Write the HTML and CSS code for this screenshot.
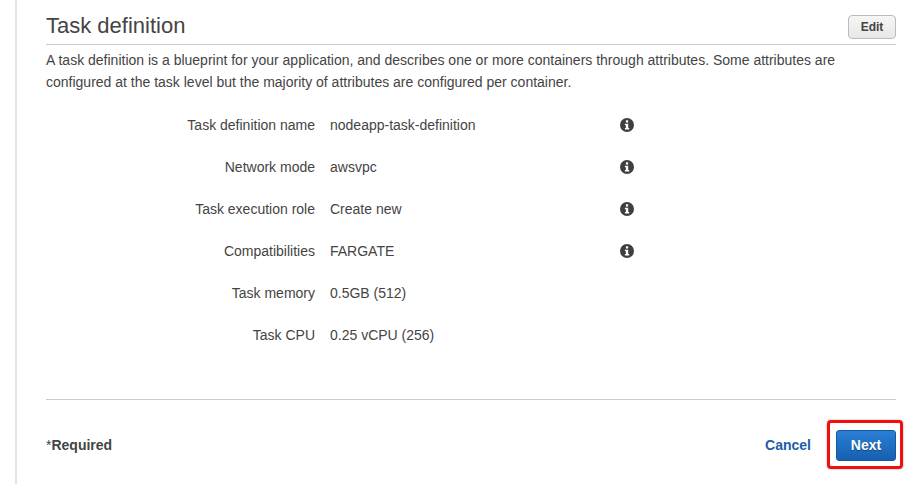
FILE: index.html
```html
<!DOCTYPE html>
<html lang="en">
<head>
<meta charset="utf-8">
<title>Task definition</title>
<link rel="stylesheet" href="styles.css">
</head>
<body>
<main class="panel">
  <header class="head">
    <h2 class="title">Task definition</h2>
    <button class="edit" type="button">Edit</button>
  </header>
  <p class="desc">A task definition is a blueprint for your application, and describes one or more containers through attributes. Some attributes are configured at the task level but the majority of attributes are configured per container.</p>
  <div class="rows">
    <div class="row"><span class="label">Task definition name</span><span class="value">nodeapp-task-definition</span>
      <svg class="info" viewBox="0 0 14 14" aria-hidden="true"><circle cx="7" cy="7" r="7" fill="#3f3f3f"/><rect x="5.9" y="2.3" width="2.3" height="2.2" rx=".5" fill="#fff"/><path d="M4.9 5.7h3.3v4.4h1v1.5H4.9v-1.5h1V7.2h-1z" fill="#fff"/></svg></div>
    <div class="row"><span class="label">Network mode</span><span class="value">awsvpc</span>
      <svg class="info" viewBox="0 0 14 14" aria-hidden="true"><circle cx="7" cy="7" r="7" fill="#3f3f3f"/><rect x="5.9" y="2.3" width="2.3" height="2.2" rx=".5" fill="#fff"/><path d="M4.9 5.7h3.3v4.4h1v1.5H4.9v-1.5h1V7.2h-1z" fill="#fff"/></svg></div>
    <div class="row"><span class="label">Task execution role</span><span class="value">Create new</span>
      <svg class="info" viewBox="0 0 14 14" aria-hidden="true"><circle cx="7" cy="7" r="7" fill="#3f3f3f"/><rect x="5.9" y="2.3" width="2.3" height="2.2" rx=".5" fill="#fff"/><path d="M4.9 5.7h3.3v4.4h1v1.5H4.9v-1.5h1V7.2h-1z" fill="#fff"/></svg></div>
    <div class="row"><span class="label">Compatibilities</span><span class="value">FARGATE</span>
      <svg class="info" viewBox="0 0 14 14" aria-hidden="true"><circle cx="7" cy="7" r="7" fill="#3f3f3f"/><rect x="5.9" y="2.3" width="2.3" height="2.2" rx=".5" fill="#fff"/><path d="M4.9 5.7h3.3v4.4h1v1.5H4.9v-1.5h1V7.2h-1z" fill="#fff"/></svg></div>
    <div class="row"><span class="label">Task memory</span><span class="value">0.5GB (512)</span></div>
    <div class="row"><span class="label">Task CPU</span><span class="value">0.25 vCPU (256)</span></div>
  </div>
  <footer class="foot">
    <span class="req">*<b>Required</b></span>
    <div class="actions">
      <a class="cancel" href="#">Cancel</a>
      <button class="next" type="button">Next</button>
      <span class="mark"></span>
    </div>
  </footer>
</main>
</body>
</html>
```
FILE: styles.css
```css
html, body { margin: 0; padding: 0; background: #fff; }
body {
  width: 924px;
  height: 484px;
  overflow: hidden;
  font-family: "Liberation Sans", Arial, sans-serif;
  font-size: 14px;
  line-height: 20px;
  color: #444;
}
.panel {
  box-sizing: border-box;
  width: 881px;
  height: 484px;
  margin-left: 15px;
  padding: 0 0 0 29px;
  border-left: 2px solid #e4e4e4;
}
.head {
  display: flex;
  align-items: flex-end;
  justify-content: space-between;
  height: 44px;
  border-bottom: 1px solid #ccc;
}
.title {
  margin: 0 0 3px;
  font-size: 22px;
  line-height: 30px;
  font-weight: 400;
  color: #444;
}
.edit {
  box-sizing: border-box;
  width: 48px;
  height: 24px;
  margin-bottom: 5px;
  padding: 0;
  border: 1px solid #bbb;
  border-radius: 4px;
  background: linear-gradient(#f6f6f6, #e7e7e7);
  font: 700 12px "Liberation Sans", Arial, sans-serif;
  color: #444;
}
.desc {
  margin: 4px 0 0;
  line-height: 22px;
  height: 44px;
}
.rows {
  margin-top: 11px;
  height: 295px;
}
.row {
  display: flex;
  align-items: center;
  height: 42px;
}
.label {
  box-sizing: border-box;
  width: 269px;
  text-align: right;
}
.value {
  width: 290px;
  margin-left: 15px;
}
.info {
  width: 14px;
  height: 14px;
}
.foot {
  display: flex;
  align-items: center;
  justify-content: space-between;
  height: 90px;
  border-top: 1px solid #ccc;
}
.req { font-size: 14px; }
.req b { font-weight: 700; }
.actions {
  position: relative;
  display: flex;
  align-items: center;
  gap: 25px;
}
.cancel {
  font-weight: 700;
  color: #1c5ea8;
  text-decoration: none;
}
.next {
  box-sizing: border-box;
  width: 60px;
  height: 31px;
  padding: 0;
  border: 1px solid #15599f;
  border-radius: 3px;
  background: linear-gradient(#2a7fd5, #1560b0);
  font: 700 14px "Liberation Sans", Arial, sans-serif;
  color: #fff;
  text-shadow: 0 1px 1px rgba(0,0,0,.35);
}
.mark {
  position: absolute;
  right: -7px;
  top: -10px;
  box-sizing: border-box;
  width: 76px;
  height: 49px;
  border: 3px solid #f00f0a;
  border-radius: 4px;
  box-shadow: 0 0 2px rgba(0,0,0,.4);
}
```
